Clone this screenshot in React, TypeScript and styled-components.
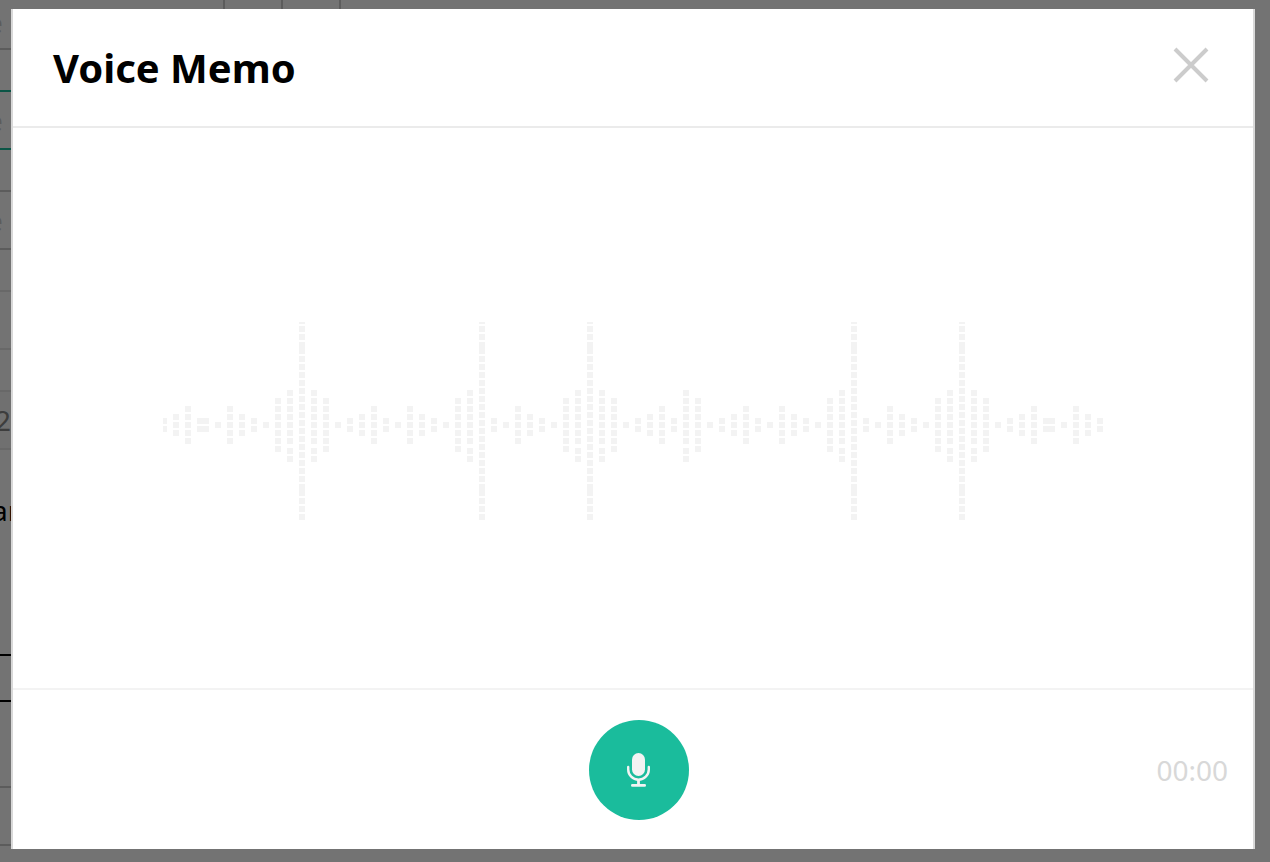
import React from "react";
import styled, { createGlobalStyle } from "styled-components";

const GlobalStyle = createGlobalStyle`
  *, *::before, *::after { box-sizing: border-box; }
  body {
    margin: 0;
    background: #ffffff;
    color: #000000;
    font-family: "Noto Sans", sans-serif;
    overflow: hidden;
  }
`;

/* ---------- page behind the dialog ---------- */

const Page = styled.div`
  height: 100vh;
  padding-right: 40px;
  overflow: hidden;
`;

const DayStrip = styled.div`
  display: flex;
  height: 50px;
  border-bottom: 2px solid #cccccc;
`;

const DayCell = styled.div<{ $width: number }>`
  flex: none;
  width: ${(p) => p.$width}px;
  padding-top: 4px;
  border-right: 2px solid #cccccc;
  font-size: 28px;
  line-height: 36px;
  color: #cccccc;
  text-indent: -13px;
`;

const Field = styled.input<{ $line: string; $fill?: string; $color?: string; $indent: number }>`
  display: block;
  width: 100%;
  height: 60px;
  margin: 40px 0 0;
  padding: 0;
  border: solid ${(p) => p.$line};
  border-width: 2px 0;
  border-radius: 0;
  background: ${(p) => p.$fill ?? "#ffffff"};
  color: ${(p) => p.$color ?? "#cccccc"};
  font: 28px "Noto Sans", sans-serif;
  text-indent: ${(p) => p.$indent}px;
`;

const Caption = styled.p`
  margin: 40px 0 0;
  font-size: 28px;
  line-height: 40px;
  text-indent: -8px;
`;

const Picker = styled.div`
  height: 48px;
  margin: 124px 0 84px;
  border: solid #000000;
  border-width: 2px 0;
`;

const Panel = styled.div`
  height: 60px;
  border: solid #cccccc;
  border-width: 2px 0;
`;

/* ---------- dialog ---------- */

const Backdrop = styled.div`
  position: fixed;
  inset: 0;
  display: flex;
  padding: 9px 15px 13px 11px;
  background: rgba(0, 0, 0, 0.55);
`;

const Dialog = styled.section`
  flex: 1;
  display: flex;
  flex-direction: column;
  min-width: 0;
  border: solid #d8d8d8;
  border-width: 0 2px;
  background: #ffffff;
`;

const Header = styled.header`
  display: flex;
  align-items: center;
  justify-content: space-between;
  padding: 31px 40px;
  border-bottom: 2px solid #ebebeb;
`;

const Title = styled.h1`
  margin: 0;
  font-size: 40px;
  line-height: 55px;
  font-weight: 700;
`;

const CloseButton = styled.button`
  display: flex;
  padding: 0 4px 6px;
  border: 0;
  background: none;
  color: #cccccc;
  cursor: pointer;
`;

const Stage = styled.div`
  flex: 1;
  display: flex;
  align-items: center;
  justify-content: center;
  min-height: 0;
  padding-top: 26px;
`;

const WaveSvg = styled.svg`
  display: block;
  width: 940px;
  max-width: 100%;
  fill: #f3f3f3;
`;

const Footer = styled.footer`
  display: grid;
  grid-template-columns: 1fr 100px 1fr;
  align-items: center;
  padding: 30px 25px 29px 37px;
  border-top: 2px solid #f3f3f3;
`;

const RecordButton = styled.button`
  grid-column: 2;
  display: flex;
  align-items: center;
  justify-content: center;
  width: 100px;
  height: 100px;
  padding: 0;
  border: 0;
  border-radius: 50%;
  background: #1abc9c;
  color: #f3f3f3;
  cursor: pointer;
`;

const Timer = styled.time`
  justify-self: end;
  font-size: 28px;
  line-height: 38px;
  color: #d8d8d8;
`;

type Block = [y: number, h: number];
const blocks = (...ys: number[]): Block[] => ys.map((y) => [y, 6]);

const levels: Record<string, Block[]> = {
  "1": blocks(100),
  "2": blocks(96, 104),
  "3": blocks(92, 100, 108),
  "5": blocks(84, 92, 100, 108, 116),
  "7": blocks(76, 84, 92, 100, 108, 116, 124),
  "9": blocks(68, 76, 84, 92, 100, 108, 116, 126, 134),
  T: [
    [0, 2],
    ...blocks(4, 12),
    [20, 12],
    ...blocks(34, 42, 50, 58, 66, 74, 82, 90, 98, 106, 114, 122, 130, 138, 146, 154),
    [162, 12],
    ...blocks(176, 184, 192),
  ],
};

type Column = { x: number; w: number; level: string };
const run = (start: number, pattern: string): Column[] =>
  pattern.split("").map((level, i) => ({ x: start + i * 12, w: 6, level }));

const columns: Column[] = [
  { x: 0, w: 4, level: "2" },
  ...run(10, "35"),
  { x: 34, w: 12, level: "2" },
  ...run(52, "153217" + "9T971235" + "2153217" + "9T2153217" + "9T9712352" + "97123521532179T2153217" + "9T971235"),
  { x: 880, w: 12, level: "2" },
  ...run(898, "1532"),
];

function Waveform() {
  return (
    <WaveSvg viewBox="0 0 940 198" aria-hidden="true" shapeRendering="crispEdges">
      {columns.map((c) =>
        levels[c.level].map(([y, h]) => (
          <rect key={`${c.x}-${y}`} x={c.x} y={y} width={c.w} height={h} />
        )),
      )}
    </WaveSvg>
  );
}

function CloseIcon() {
  return (
    <svg width="36" height="36" viewBox="0 0 36 36" fill="none" stroke="currentColor" strokeWidth="4" aria-hidden="true">
      <path d="M2 2 34 34M34 2 2 34" />
    </svg>
  );
}

function MicIcon() {
  return (
    <svg width="24" height="34" viewBox="0 0 24 34" fill="none" stroke="currentColor" aria-hidden="true">
      <rect x="5" y="0" width="13" height="23" rx="6.5" fill="currentColor" stroke="none" />
      <path d="M1.2 14v2.4a10.3 10.3 0 0 0 20.6 0V14" strokeWidth="2.4" strokeLinecap="round" />
      <path d="M11.5 27v5" strokeWidth="2.8" />
      <path d="M5.3 32.4h12.4" strokeWidth="2.6" strokeLinecap="round" />
    </svg>
  );
}

export default function App() {
  return (
    <>
      <GlobalStyle />
      <Page inert>
        <DayStrip>
          <DayCell $width={225}>e</DayCell>
          <DayCell $width={58} />
          <DayCell $width={58} />
        </DayStrip>
        <Field aria-label="First" defaultValue="e" $line="#1abc9c" $indent={-13} />
        <Field aria-label="Second" defaultValue="e" $line="#cccccc" $indent={-13} />
        <Field aria-label="Third" $line="#e6e6e6" $indent={0} />
        <Field aria-label="Year" defaultValue="2" $line="#e6e6e6" $fill="#f9f9f9" $color="#888888" $indent={-5} />
        <Caption>ar</Caption>
        <Picker />
        <Panel />
      </Page>
      <Backdrop>
        <Dialog role="dialog" aria-modal="true" aria-labelledby="memo-title">
          <Header>
            <Title id="memo-title">Voice Memo</Title>
            <CloseButton type="button" aria-label="Close">
              <CloseIcon />
            </CloseButton>
          </Header>
          <Stage>
            <Waveform />
          </Stage>
          <Footer>
            <RecordButton type="button" aria-label="Record">
              <MicIcon />
            </RecordButton>
            <Timer>00:00</Timer>
          </Footer>
        </Dialog>
      </Backdrop>
    </>
  );
}
